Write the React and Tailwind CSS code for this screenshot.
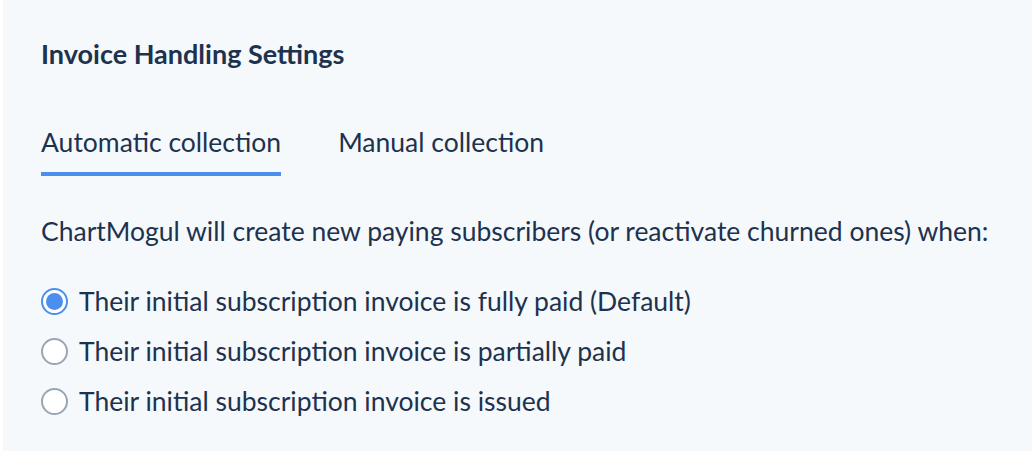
import React, { useState } from 'react';

const options = [
  { id: 'paid', label: 'Their initial subscription invoice is fully paid (Default)' },
  { id: 'partial', label: 'Their initial subscription invoice is partially paid' },
  { id: 'issued', label: 'Their initial subscription invoice is issued' },
];

const Radio = ({ checked }) => (
  <span
    className={
      checked
        ? 'w-[27px] h-[27px] rounded-full border-[2px] border-[#4a8fee] bg-white flex items-center justify-center shrink-0'
        : 'w-[27px] h-[27px] rounded-full border-[2px] border-[#97a6b5] bg-white shrink-0'
    }
  >
    {checked && <span className="w-[17px] h-[17px] rounded-full bg-[#4a8fee]"></span>}
  </span>
);

const App = () => {
  const [tab, setTab] = useState('auto');
  const [choice, setChoice] = useState('paid');

  return (
    <div className="w-[1032px] h-[454px] bg-white" style={{ fontFamily: 'Lato, "Noto Sans", sans-serif' }}>
      <div className="ml-[3px] h-[451px] bg-[#f5f9fc] pl-[38px] pt-[37px] text-[#1d324e]">
        <h2 className="text-[27px] leading-[34px] font-bold">Invoice Handling Settings</h2>

        <div className="flex gap-[57px] mt-[55px]">
          <button
            onClick={() => setTab('auto')}
            className="text-[26.5px] leading-[32px] pb-[14px] border-b-[4px] border-[#4a8fee]"
          >
            Automatic collection
          </button>
          <button
            onClick={() => setTab('manual')}
            className="text-[26.5px] leading-[32px] pb-[14px] border-b-[4px] border-transparent"
          >
            Manual collection
          </button>
        </div>

        <p className="text-[26.5px] leading-[32px] mt-[39px] whitespace-nowrap">
          ChartMogul will create new paying subscribers (or reactivate churned ones) when:
        </p>

        <div className="flex flex-col mt-[29px]">
          {options.map((o) => (
            <label
              key={o.id}
              onClick={() => setChoice(o.id)}
              className="flex items-center gap-[11px] h-[50px] cursor-pointer"
            >
              <Radio checked={choice === o.id} />
              <span className="text-[26.5px] leading-[32px]">{o.label}</span>
            </label>
          ))}
        </div>
      </div>
    </div>
  );
};

export default App;
